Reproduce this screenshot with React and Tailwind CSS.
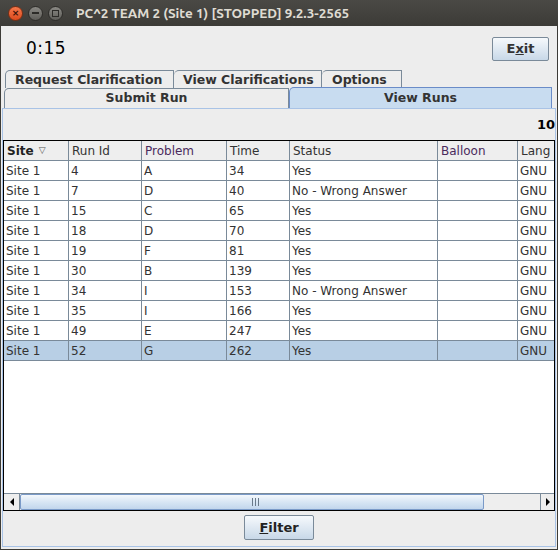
import React from "react";

const rows = [
  ["Site 1", "4", "A", "34", "Yes"],
  ["Site 1", "7", "D", "40", "No - Wrong Answer"],
  ["Site 1", "15", "C", "65", "Yes"],
  ["Site 1", "18", "D", "70", "Yes"],
  ["Site 1", "19", "F", "81", "Yes"],
  ["Site 1", "30", "B", "139", "Yes"],
  ["Site 1", "34", "I", "153", "No - Wrong Answer"],
  ["Site 1", "35", "I", "166", "Yes"],
  ["Site 1", "49", "E", "247", "Yes"],
  ["Site 1", "52", "G", "262", "Yes"],
];

const cols = [
  { name: "Site", w: "w-[65px]", bold: true },
  { name: "Run Id", w: "w-[73px]" },
  { name: "Problem", w: "w-[85px]", purple: true },
  { name: "Time", w: "w-[63px]" },
  { name: "Status", w: "w-[148px]" },
  { name: "Balloon", w: "w-[80px]", purple: true },
  { name: "Lang", w: "w-[40px]" },
];

export default function App() {
  return (
    <div className="w-[558px] h-[550px] bg-[#3c3b37] flex flex-col overflow-hidden" style={{ fontFamily: "'DejaVu Sans', sans-serif" }}>
      {/* title bar */}
      <div className="h-[26px] flex items-center bg-gradient-to-b from-[#4a4945] to-[#3c3b37] shrink-0">
        <div className="flex items-center gap-[5px] pl-[8px]">
          <div className="w-[15px] h-[15px] rounded-full bg-gradient-to-b from-[#f4774a] to-[#dc4a1c] border border-[#7a2f14] flex items-center justify-center text-[9px] font-bold text-[#3a1208] leading-none">×</div>
          <div className="w-[15px] h-[15px] rounded-full bg-gradient-to-b from-[#8a8984] to-[#5e5d59] border border-[#2e2d2a] flex items-center justify-center">
            <div className="w-[7px] h-[2px] bg-[#2c2b28]"></div>
          </div>
          <div className="w-[15px] h-[15px] rounded-full bg-gradient-to-b from-[#8a8984] to-[#5e5d59] border border-[#2e2d2a] flex items-center justify-center">
            <div className="w-[7px] h-[7px] border-[1.5px] border-[#2c2b28]"></div>
          </div>
        </div>
        <div className="ml-[13px] text-[13.5px] font-bold text-[#dfdbd2]" style={{ fontFamily: "Ubuntu, 'DejaVu Sans', sans-serif" }}>
          PC^2 TEAM 2 (Site 1) [STOPPED] 9.2.3-2565
        </div>
      </div>

      {/* body */}
      <div className="flex-1 bg-[#ededed] flex flex-col px-[1px] pb-[2px] mx-[1px] mb-[1px]">
        <div className="h-[44px] flex items-center justify-between pl-[24px] pr-[7px] pt-[1px]">
          <div className="text-[17px] text-black tracking-[0.5px]">0:15</div>
          <button className="w-[57px] h-[24px] border border-[#7a8a99] bg-gradient-to-b from-[#f6f9fc] to-[#c8d8e8] text-[13px] font-bold text-[#333] rounded-[2px]">
            E<span className="underline">x</span>it
          </button>
        </div>

        {/* tabs row 1 */}
        <div className="flex h-[18px] pl-[3px] items-end">
          <div className="w-[169px] h-[18px] border border-b-0 border-[#7a8a99] rounded-tl-[5px] flex items-center pl-[9px] pt-[1px] text-[12.5px] font-bold text-[#333]">Request Clarification</div>
          <div className="w-[148px] h-[18px] border border-b-0 border-l-0 border-[#7a8a99] rounded-tl-[5px] flex items-center pl-[9px] pt-[1px] text-[12.5px] font-bold text-[#333]">View Clarifications</div>
          <div className="w-[80px] h-[18px] border border-b-0 border-l-0 border-[#7a8a99] rounded-tl-[5px] flex items-center pl-[10px] pt-[1px] text-[12.5px] font-bold text-[#333]">Options</div>
        </div>
        {/* tabs row 2 */}
        <div className="flex h-[20px] items-end pl-[2px]">
          <div className="w-[285px] h-[20px] border border-b-0 border-[#7a8a99] rounded-tl-[5px] flex items-center justify-center text-[12.5px] font-bold text-[#333]">Submit Run</div>
          <div className="w-[263px] h-[21px] border border-b-0 border-[#6a8cc8] rounded-tl-[5px] bg-[#c8dcf0] flex items-center justify-center text-[12.5px] font-bold text-[#333]">View Runs</div>
        </div>

        {/* content panel */}
        <div className="flex-1 border border-[#a9c3e6] flex flex-col">
          <div className="h-[31px] flex items-center justify-end pr-0 text-[13px] font-bold text-black">10</div>
          <div className="h-[371px] border border-black bg-white flex flex-col overflow-hidden">
            <div className="flex-1 overflow-hidden">
              {/* header */}
              <div className="flex h-[20px] bg-[#eeeeee] border-b border-[#7a8a99]">
                {cols.map((c, i) => (
                  <div key={i} className={`${c.w} shrink-0 border-r border-[#7a8a99] flex items-center pl-[3px] text-[12px] ${c.bold ? "font-bold text-[#222]" : c.purple ? "text-[#4a2a5c]" : "text-[#333]"}`}>
                    {c.name}
                    {c.bold && <span className="ml-[5px] text-[9px] font-normal text-[#555]">▽</span>}
                  </div>
                ))}
              </div>
              {rows.map((r, ri) => {
                const sel = ri === rows.length - 1;
                return (
                  <div key={ri} className={`flex h-[20px] border-b border-[#7a8a99] ${sel ? "bg-[#b8cfe5]" : "bg-white"}`}>
                    {[...r, "", "GNU"].map((v, ci) => (
                      <div key={ci} className={`${cols[ci].w} shrink-0 border-r border-[#7a8a99] flex items-center pl-[2px] text-[12px] text-[#333]`}>
                        {v}
                      </div>
                    ))}
                  </div>
                );
              })}
            </div>
            {/* horizontal scrollbar */}
            <div className="h-[17px] flex border-t border-[#7a8a99] bg-[#eeeeee]">
              <div className="w-[16px] border-r border-[#7a8a99] flex items-center justify-center">
                <div className="w-0 h-0 border-y-[4px] border-y-transparent border-r-[4px] border-r-black"></div>
              </div>
              <div className="w-[464px] bg-gradient-to-b from-[#f4f8fc] via-[#d8e6f4] to-[#c2d6ec] border border-[#7a9ac8] rounded-[2px] flex items-center justify-end pr-[224px]">
                <div className="flex gap-[2px] h-[8px]">
                  <div className="w-[1px] bg-[#6a7a8a]"></div>
                  <div className="w-[1px] bg-[#6a7a8a]"></div>
                  <div className="w-[1px] bg-[#6a7a8a]"></div>
                </div>
              </div>
              <div className="flex-1 border-r border-[#7a8a99]"></div>
              <div className="w-[13px] flex items-center justify-center">
                <div className="w-0 h-0 border-y-[4px] border-y-transparent border-l-[4px] border-l-black"></div>
              </div>
            </div>
          </div>
          <div className="flex-1 flex items-center justify-center pb-[2px]">
            <button className="w-[70px] h-[25px] border border-[#7a8a99] bg-gradient-to-b from-[#f6f9fc] to-[#c8d8e8] text-[13px] font-bold text-[#222] rounded-[2px]">
              <span className="underline">F</span>ilter
            </button>
          </div>
        </div>
      </div>
    </div>
  );
}
